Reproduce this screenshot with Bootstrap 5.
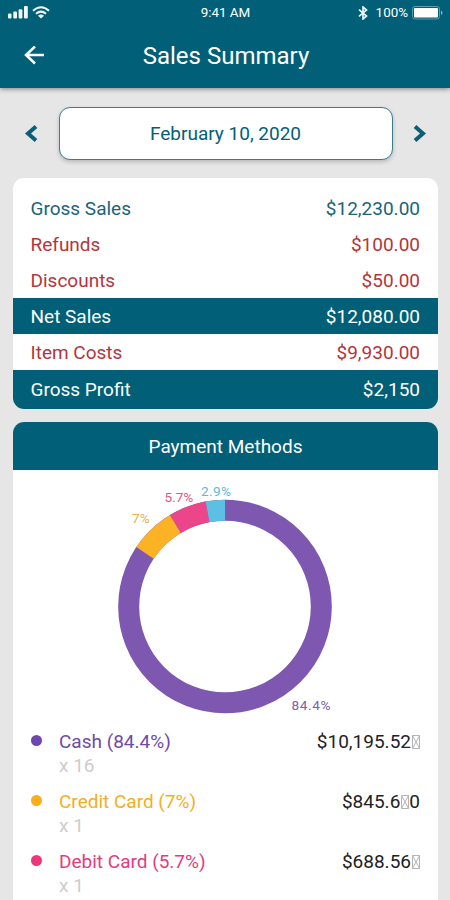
<!DOCTYPE html>
<html lang="en">
<head>
<meta charset="utf-8">
<meta name="viewport" content="width=device-width, initial-scale=1">
<title>Sales Summary</title>
<link href="https://cdn.jsdelivr.net/npm/bootstrap@5.3.0/dist/css/bootstrap.min.css" rel="stylesheet">
<style>
:root { --teal: #016078; }
body { font-family: Roboto, sans-serif; background: #e6e6e6; height: 900px; overflow: hidden; font-size: 19px; line-height: 24px; color: #222; }
svg { display: block; flex: none; }
.app-head { background: var(--teal); height: 88px; box-shadow: 0 1px 5px rgba(0,0,0,.45); }
.status { height: 26px; padding: 0 7px 0 8px; font-size: 13.4px; line-height: 26px; }
.status > div { flex: 1 1 0; }
.title-row { height: 60px; padding: 0 24px; }
.title-row h1 { font-size: 24px; line-height: 30px; font-weight: 400; padding-right: 19px; }
.date-row { padding: 19px 24px 0 25px; height: 72px; }
.date-btn { width: 334px; height: 53px; border: 1.5px solid #3d7b8f; border-radius: 11px; color: var(--teal); font-size: 19px; line-height: 52px; box-shadow: 0 2px 4px rgba(0,0,0,.2); }
.panel { margin: 0 12px 0 13px; border-radius: 11px; border: 0; overflow: hidden; }
.totals { margin-top: 18px; height: 231px; padding-top: 12px; }
.total-row { height: 36px; padding: 2px 18px 0 17.5px; }
.total-row.solid, .panel-title { background: var(--teal); color: #fff; }
.total-row:last-child { height: 39px; padding-bottom: 2px; }
.txt-teal { color: #176578; } .txt-red { color: #b5343c; }
.methods { margin-top: 13px; height: 500px; }
.panel-title { height: 48px; line-height: 50px; }
.chart text { font-size: 13.6px; }
.method { height: 60px; padding: 0 18px 0 17.5px; }
.dot { width: 11px; height: 11px; margin: 5px 17.5px 0 0; }
.count { color: #ccc; }
.c-cash { color: #6f4aa6; } .c-credit { color: #f6ae20; } .c-debit { color: #e33c7c; }
.missing { width: 8px; height: 14px; margin-left: 1px; margin-right: 0; fill: none; stroke: #b5b5b5; }
</style>
<script src="https://cdn.jsdelivr.net/npm/bootstrap@5.3.0/dist/js/bootstrap.bundle.min.js"></script>
</head>
<body>
<header class="app-head position-relative text-white">
  <div class="status d-flex align-items-center">
    <div class="d-flex align-items-center">
      <svg width="42" height="14" viewBox="0 0 42 14">
        <g fill="#f2f8fa"><rect x="0" y="7.5" width="3.5" height="5" rx="1"/><rect x="5.3" y="5.500" width="3.7" height="7" rx="1"/><rect x="10.6" y="3.2" width="3.8" height="9.3" rx="1"/><rect x="16" y="0" width="3.8" height="12.500" rx="1"/></g>
        <g fill="none" stroke="#f2f8fa" stroke-width="2"><path d="M25 4.700Q33-2.300 41 4.700"/><path d="M28 7.800Q33 3.500 38 7.800"/></g><path d="M30 9.700Q33 7.500 36 9.700L33 12.500Z" fill="#f2f8fa"/>
      </svg>
    </div>
    <div class="text-center">9:41 AM</div>
    <div class="d-flex align-items-center justify-content-end">
      <svg width="10" height="14" viewBox="0 0 10 14" fill="none" stroke="#eaf4f7" stroke-width="1.700"><path d="M1 3.7 8.5 10 5 13V1L8.5 4 1 10.3"/></svg>
      <span class="ps-2">100%</span>
      <svg class="ms-1" width="31" height="14" viewBox="0 0 31 14"><rect x=".5" y=".5" width="27" height="12.5" rx="2.5" fill="none" stroke="#5d9bad"/><rect x="2" y="2" width="24" height="9.5" rx="1" fill="#fff"/><path d="M29 4.5q3 2.2 0 4.5z" fill="#8db7c3"/></svg>
    </div>
  </div>
  <div class="title-row d-flex align-items-center">
    <svg width="21" height="20" viewBox="0 0 21 20" fill="none" stroke="#fff" stroke-width="2.5"><path d="M20 9H2M11 .5 2 9 11 17.500"/></svg>
    <h1 class="flex-fill text-center mb-0">Sales Summary</h1>
  </div>
</header>
<main>
  <div class="date-row d-flex align-items-center justify-content-between">
    <svg width="13" height="18" viewBox="0 0 13 18" fill="none" stroke="#0b6078" stroke-width="4"><path d="M11 1.500 3 8.500l8 7"/></svg>
    <div class="date-btn bg-white text-center">February 10, 2020</div>
    <svg width="13" height="18" viewBox="0 0 13 18" fill="none" stroke="#0b6078" stroke-width="4"><path d="M2 1.500 10 8.500l-8 7"/></svg>
  </div>
  <section class="panel totals bg-white">
    <div class="total-row d-flex align-items-center justify-content-between txt-teal"><span>Gross Sales</span><span>$12,230.00</span></div>
    <div class="total-row d-flex align-items-center justify-content-between txt-red"><span>Refunds</span><span>$100.00</span></div>
    <div class="total-row d-flex align-items-center justify-content-between txt-red"><span>Discounts</span><span>$50.00</span></div>
    <div class="total-row solid d-flex align-items-center justify-content-between"><span>Net Sales</span><span>$12,080.00</span></div>
    <div class="total-row d-flex align-items-center justify-content-between txt-red"><span>Item Costs</span><span>$9,930.00</span></div>
    <div class="total-row solid d-flex align-items-center justify-content-between"><span>Gross Profit</span><span>$2,150</span></div>
  </section>
  <section class="panel methods bg-white">
    <div class="panel-title text-center">Payment Methods</div>
    <svg class="chart" width="425" height="260" viewBox="13 470 425 260">
      <g fill="none" stroke-width="21">
        <circle cx="225" cy="606.5" r="96.3" stroke="#7e57b0"/>
        <g transform="rotate(-90 225 606.5)">
          <circle cx="225" cy="606.5" r="96.3" stroke="#fbb224" pathLength="100" stroke-dasharray="7 93" stroke-dashoffset="-84.4"/>
          <circle cx="225" cy="606.5" r="96.3" stroke="#ec4589" pathLength="100" stroke-dasharray="5.7 94.3" stroke-dashoffset="-91.4"/>
        </g>
        <path d="M207.550 511.800A96.300 96.300 0 0 1 225 510.200" stroke="#5bc0e3"/>
      </g>
      <text x="132" y="522.5" fill="#e6b04a">7%</text>
      <text x="164.500" y="501.500" fill="#dd5687">5.7%</text>
      <text x="201" y="496" fill="#5bbcda" textLength="30">2.9%</text>
      <text x="291.500" y="710" fill="#7c62a8" textLength="39">84.4%</text>
    </svg>
    <div class="method d-flex">
      <svg class="dot" viewBox="0 0 11 11"><circle cx="5.500" cy="5.500" r="5.500" fill="#6f46ad"/></svg>
      <div class="flex-fill"><div class="c-cash">Cash (84.4%)</div><div class="count">x 16</div></div>
      <div class="d-flex align-items-center align-self-start"><span>$10,195.52</span><svg class="missing" viewBox="0 0 8 14"><path d="M.5.5h7v13h-7zL7.500 13.500M7.500.5.5 13.500"/></svg></div>
    </div>
    <div class="method d-flex">
      <svg class="dot" viewBox="0 0 11 11"><circle cx="5.500" cy="5.500" r="5.500" fill="#fbae17"/></svg>
      <div class="flex-fill"><div class="c-credit">Credit Card (7%)</div><div class="count">x 1</div></div>
      <div class="d-flex align-items-center align-self-start"><span>$845.6</span><svg class="missing" viewBox="0 0 8 14"><path d="M.5.5h7v13h-7zL7.500 13.500M7.500.5.5 13.500"/></svg><span>0</span></div>
    </div>
    <div class="method d-flex">
      <svg class="dot" viewBox="0 0 11 11"><circle cx="5.500" cy="5.500" r="5.500" fill="#ec3680"/></svg>
      <div class="flex-fill"><div class="c-debit">Debit Card (5.7%)</div><div class="count">x 1</div></div>
      <div class="d-flex align-items-center align-self-start"><span>$688.56</span><svg class="missing" viewBox="0 0 8 14"><path d="M.5.5h7v13h-7zL7.500 13.500M7.500.5.5 13.500"/></svg></div>
    </div>
  </section>
</main>
</body>
</html>
